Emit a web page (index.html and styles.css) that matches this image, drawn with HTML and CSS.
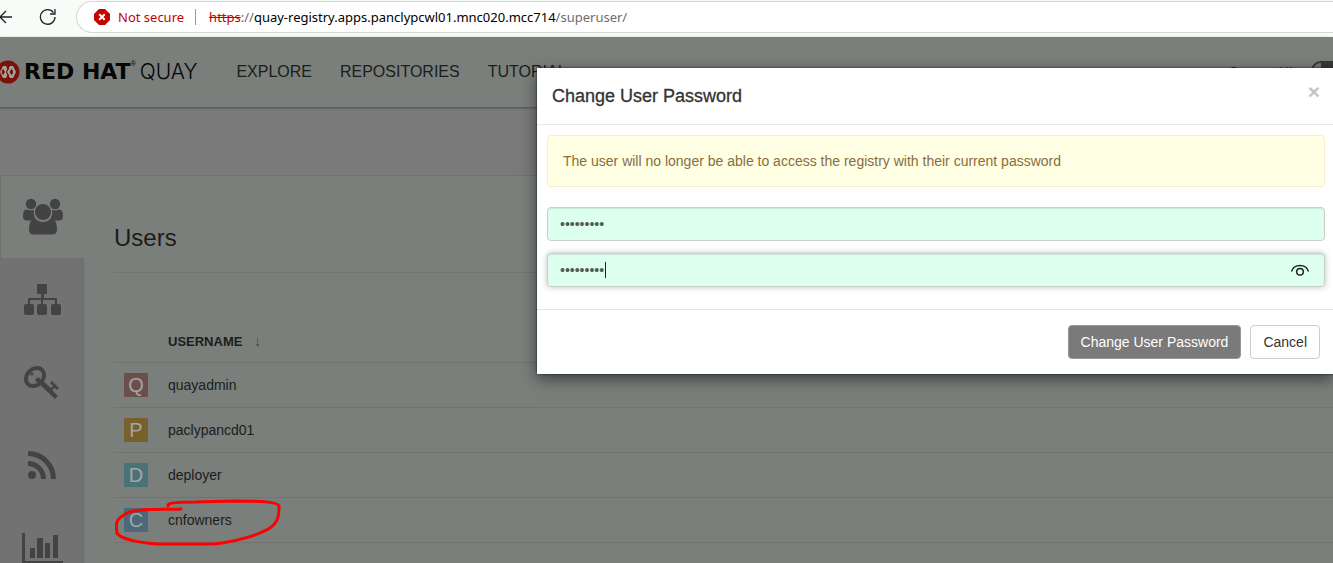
FILE: index.html
```html
<!DOCTYPE html>
<html lang="en">
<head>
<meta charset="utf-8">
<title>Red Hat Quay - Superuser</title>
<link rel="stylesheet" href="styles.css">
</head>
<body>
<div class="browser">
  <button class="tool" aria-label="Back"><svg width="16" height="16" viewBox="0 0 16 16"><path d="M16 8H4M10 2L4 8l6 6" /></svg></button>
  <button class="tool" aria-label="Reload"><svg width="18" height="18" viewBox="0 0 18 18"><path d="M16 9A7.300 7.300 0 1 1 14.500 4.500M16 1v5h-5" /></svg></button>
  <div class="address">
    <svg class="warn" width="16" height="16" viewBox="0 0 16 16"><path fill="#c70000" d="M5 0h6l5 5v6l-5 5H5l-5-5V5z"/><path stroke="#fff" stroke-width="2" d="M5.300 5.300l5.400 5.400M10.700 5.300l-5.400 5.400"/></svg>
    <span class="insecure">Not secure</span>
    <span class="divider"></span>
    <span class="url"><s>https</s>://<b>quay-registry.apps.panclypcwl01.mnc020.mcc714</b>/superuser/</span>
  </div>
</div>
<div class="app">
  <header class="header">
    <a class="brand" href="#">
      <svg width="20" height="24" viewBox="0 0 20 24"><circle cx="8" cy="12" r="11.500" fill="#7d1009"/><path fill="#a3a5a3" d="M3 6h3l3 6-3 6H3l-3-6zM10 6h3l3 6-3 6h-3l-3-6z"/><path fill="#7d1009" d="M3 8.500L5 12l-2 3.500L1.500 12zM11.500 8.500l2 3.500-2 3.500-2-3.500zM8 6.500L9 9l-2 3 2 3-1 2.500-2-5.500z"/></svg>
      <span class="redhat">RED HAT</span><sup class="reg">®</sup><span class="quay">QUAY</span>
    </a>
    <nav class="nav">
      <a href="#">EXPLORE</a>
      <a href="#">REPOSITORIES</a>
      <a href="#">TUTORIAL</a>
    </nav>
    <div class="ui-switch"><span>Current UI</span><span class="toggle"></span></div>
  </header>
  <div class="title-band"></div>
  <div class="panel">
    <nav class="tabs">
      <a class="tab active" href="#" aria-label="Users"><svg width="40" height="38" viewBox="0 0 40 38"><circle cx="8" cy="6" r="5.200"/><circle cx="32" cy="6" r="5.200"/><path d="M4 11.500l3 1 4-.5a11 11 0 0 0 1 8l-3 2.500H4c-4 0-4-3-4-5 0-3 1-6 4-6zM36 11.500l-3 1-4-.5a11 11 0 0 1-1 8l3 2.500h5c4 0 4-3 4-5 0-3-1-6-4-6z"/><circle cx="20" cy="14" r="8"/><path d="M12 20a10 10 0 0 0 16 0c4 0 6 5 6 12 0 3-2 4.500-5 4.500H11c-3 0-5-1.500-5-4.500 0-7 2-12 6-12z"/></svg></a>
      <a class="tab" href="#" aria-label="Organizations"><svg width="38" height="32" viewBox="0 0 38 32"><path d="M14 0h10v10h-3v4h13v6h2q2 0 2 2v7q0 2-2 2h-6q-2 0-2-2v-7q0-2 2-2h2v-4H20v4h2q2 0 2 2v7q0 2-2 2h-6q-2 0-2-2v-7q0-2 2-2h2v-4H7v4h2q2 0 2 2v7q0 2-2 2H3q-2 0-2-2v-7q0-2 2-2h2v-6h13v-4h-4z"/></svg></a>
      <a class="tab" href="#" aria-label="Keys"><svg width="36" height="34" viewBox="0 0 36 34"><ellipse cx="11" cy="11" rx="10" ry="8" transform="rotate(-45 11 11)" fill="none" stroke="#434343" stroke-width="4"/><circle cx="14" cy="14" r="2.500"/><circle cx="8" cy="8" r="1.500"/><path d="M14 17l4-3 9 8 2-2-3-3 2-2 7 7-2 2-2-2-3 2 6 6-3 3z"/></svg></a>
      <a class="tab" href="#" aria-label="Logs"><svg width="28" height="30" viewBox="0 0 28 30"><circle cx="4" cy="24" r="4"/><path fill="none" stroke="#434343" stroke-width="5" d="M0 12.500A15.500 15.500 0 0 1 15.500 28M0 2.500A25.500 25.500 0 0 1 25.500 28"/></svg></a>
      <a class="tab" href="#" aria-label="Usage"><svg width="42" height="32" viewBox="0 0 42 32"><path d="M1 0h3v28h38v3H1zM9 15h5v10H9zM16 5h6v20h-6zM24 10h5v15h-5zM32 2h5v23h-5z"/></svg></a>
    </nav>
    <main class="content">
      <h1>Users</h1>
      <table class="users">
        <thead><tr><th class="avatar-cell"></th><th>USERNAME <span class="sort">↓</span></th></tr></thead>
        <tbody>
          <tr><td><span class="avatar rose">Q</span></td><td>quayadmin</td></tr>
          <tr><td><span class="avatar gold">P</span></td><td>paclypancd01</td></tr>
          <tr><td><span class="avatar teal">D</span></td><td>deployer</td></tr>
          <tr><td><span class="avatar blue">C</span></td><td>cnfowners</td></tr>
        </tbody>
      </table>
    </main>
  </div>
</div>
<svg class="marker" width="170" height="50" viewBox="0 0 170 50"><path d="M53 7C52 4 60 3 80 3L120 2C145 2 163 3 164 7C164 15 165 26 147 33C137 38 110 45 95 45H43C25 44 5 40 2 34C0 22 2 20 12 14C22 9 50 11 66 10"/></svg>
<form class="modal" role="dialog" aria-labelledby="dialog-title">
  <div class="modal-header"><h2 id="dialog-title">Change User Password</h2><button type="button" class="close" aria-label="Close">×</button></div>
  <div class="modal-body">
    <div class="alert">The user will no longer be able to access the registry with their current password</div>
    <input class="field" type="password" value="password1" aria-label="New password">
    <div class="confirm">
      <input class="field focused" type="password" value="password1" aria-label="Verify new password">
      <span class="caret"></span>
      <button type="button" class="reveal" aria-label="Show password"><svg width="20" height="14" viewBox="0 0 20 14"><path d="M1.500 8.500C4 .5 16 .5 18.500 8.500"/><circle cx="10" cy="8.700" r="3.300"/></svg></button>
    </div>
  </div>
  <div class="modal-footer"><button type="submit" class="btn primary">Change User Password</button><button type="button" class="btn">Cancel</button></div>
</form>
</body>
</html>
```
FILE: styles.css
```css
* { box-sizing: border-box; }
body {
  margin: 0;
  height: 100vh;
  overflow: hidden;
  display: flex;
  flex-direction: column;
  position: relative;
  background: #7a7f7b;
  color: #1b1d1b;
  font-family: "Liberation Sans", Arial, sans-serif;
  font-size: 14px;
}
a { color: inherit; text-decoration: none; }
button { font: inherit; cursor: pointer; }

.browser {
  height: 37px;
  flex: none;
  display: flex;
  align-items: center;
  padding-bottom: 3px;
  background: #f7fcf9;
  font-family: "Noto Sans", sans-serif;
  font-size: 13px;
}
.tool { display: flex; border: 0; padding: 0; background: none; }
.tool svg { fill: none; stroke: #222; stroke-width: 1.3; }
.tool:first-child { margin: 0 27px 0 -4px; }
.address {
  flex: 1;
  height: 32px;
  margin-left: 19px;
  padding-left: 17px;
  display: flex;
  align-items: center;
  white-space: nowrap;
  background: #fff;
  border: 1px solid #d3d7d5;
  border-right: 0;
  border-radius: 16px 0 0 16px;
}
.warn { flex: none; }
.insecure { margin-left: 8px; color: #c70000; }
.divider { width: 1px; height: 16px; margin: 0 13px 0 11px; background: #999; }
.url { color: #6d6d6d; }
.url s { color: #c70000; }
.url b { color: #000; font-weight: 400; }

.app { flex: 1; min-height: 0; display: flex; flex-direction: column; }
.header {
  height: 70px;
  flex: none;
  display: flex;
  align-items: center;
  background: #7a7f7b;
  box-shadow: 0 1px 2px #4d504d;
  position: relative;
}
.brand { display: flex; align-items: center; color: #050505; }
.redhat { margin-left: 4px; font: 700 22px/24px "DejaVu Sans", sans-serif; }
.reg { align-self: flex-start; font-size: 7px; }
.quay { margin-left: 4px; font: 300 21px/24px Inter, sans-serif; }
.nav { display: flex; gap: 28px; margin-left: 39px; font-size: 16px; }
.ui-switch { margin-left: auto; display: flex; align-items: center; gap: 18px; }
.toggle { width: 22px; height: 22px; border: 2px solid #363636; border-right-width: 12px; border-radius: 10px 0 0 10px; background: #777; }
.title-band { height: 68px; flex: none; background: #7b7a7b; }
.panel { flex: 1; min-height: 0; display: flex; border-top: 1px solid #6f716f; }
.tabs { width: 84px; flex: none; overflow: hidden; background: #727272; }
.tab {
  height: 83px;
  display: flex;
  align-items: center;
  justify-content: center;
  border-bottom: 1px solid #6d7170;
  border-right: 1px solid #6b706d;
}
.tab.active { background: #7a7f7b; border-left: 1px solid #6f716f; border-right: 0; }
.tab svg { fill: #434343; }

.content { flex: 1; padding: 32px 0 0 30px; }
h1 { height: 65px; margin: 0; padding-top: 16px; font-size: 24px; line-height: 28px; font-weight: 400; border-bottom: 1px solid #707571; }
.users { width: 100%; margin-top: 47px; border-collapse: collapse; }
.users th, .users td { height: 45px; padding: 0; text-align: left; border-bottom: 1px solid #6f7470; }
.users th { height: 42px; font-size: 13px; }
.users .avatar-cell { width: 54px; }
.sort { margin-left: 8px; color: #444; font-size: 14px; font-weight: 400; }
.avatar {
  display: block;
  width: 24px;
  height: 24px;
  margin-left: 10px;
  color: #a2a6a3;
  font-size: 20px;
  line-height: 24px;
  text-align: center;
}
.rose { background: #6c4f4b; }
.gold { background: #78602a; }
.teal { background: #4b7376; }
.blue { background: #4c687a; }

.marker { position: absolute; left: 115px; top: 499px; fill: none; stroke: #f00; stroke-width: 3; stroke-linecap: round; }

.modal { position: absolute; top: 68px; left: 537px; right: 0; background: #fff; color: #333; box-shadow: 0 5px 15px rgba(0, 0, 0, .5), 0 0 2px #222; }
.modal-header { height: 57px; display: flex; justify-content: space-between; padding: 15px 13px 0 15px; border-bottom: 1px solid #e5e8e7; }
.modal-header h2 { margin: 0; font-size: 18px; line-height: 26px; font-weight: 400; -webkit-text-stroke: 0.3px #333; }
.close { height: 18px; padding: 0; border: 0; background: none; color: #c4c4c4; font-size: 21px; font-weight: 700; line-height: 16px; }
.modal-body { padding: 10px 8px 22px 10px; }
.alert { margin-bottom: 20px; padding: 15px; border: 1px solid #faebcc; border-radius: 4px; background: #ffffe4; color: #8a6d3b; line-height: 20px; }
.field {
  display: block;
  width: 100%;
  height: 34px;
  padding: 6px 12px;
  border: 1px solid #c8cfcb;
  border-radius: 4px;
  outline: 0;
  background: #ddffee;
  color: #505c55;
  font: 14px "Liberation Sans", Arial, sans-serif;
  box-shadow: inset 0 1px 1px rgba(0, 0, 0, .08);
}
.confirm { position: relative; margin-top: 12px; }
.focused { box-shadow: inset 0 1px 1px rgba(0, 0, 0, .08), 0 0 6px rgba(0, 0, 0, .25); }
.caret { position: absolute; left: 58px; top: 9px; width: 1px; height: 16px; background: #222; }
.reveal { position: absolute; right: 15px; top: 10px; padding: 0; border: 0; background: none; display: flex; }
.reveal svg { fill: none; stroke: #222; stroke-width: 1.5; }
.modal-footer { display: flex; justify-content: flex-end; gap: 9px; padding: 15px 13px 15px 15px; border-top: 1px solid #e5e5e5; }
.btn { height: 34px; padding: 0 12px; border: 1px solid #c8cfcc; border-radius: 4px; background: #fff; color: #333; }
.btn.primary { background: #7a7a7a; border-color: #919995; color: #fff; }
```
